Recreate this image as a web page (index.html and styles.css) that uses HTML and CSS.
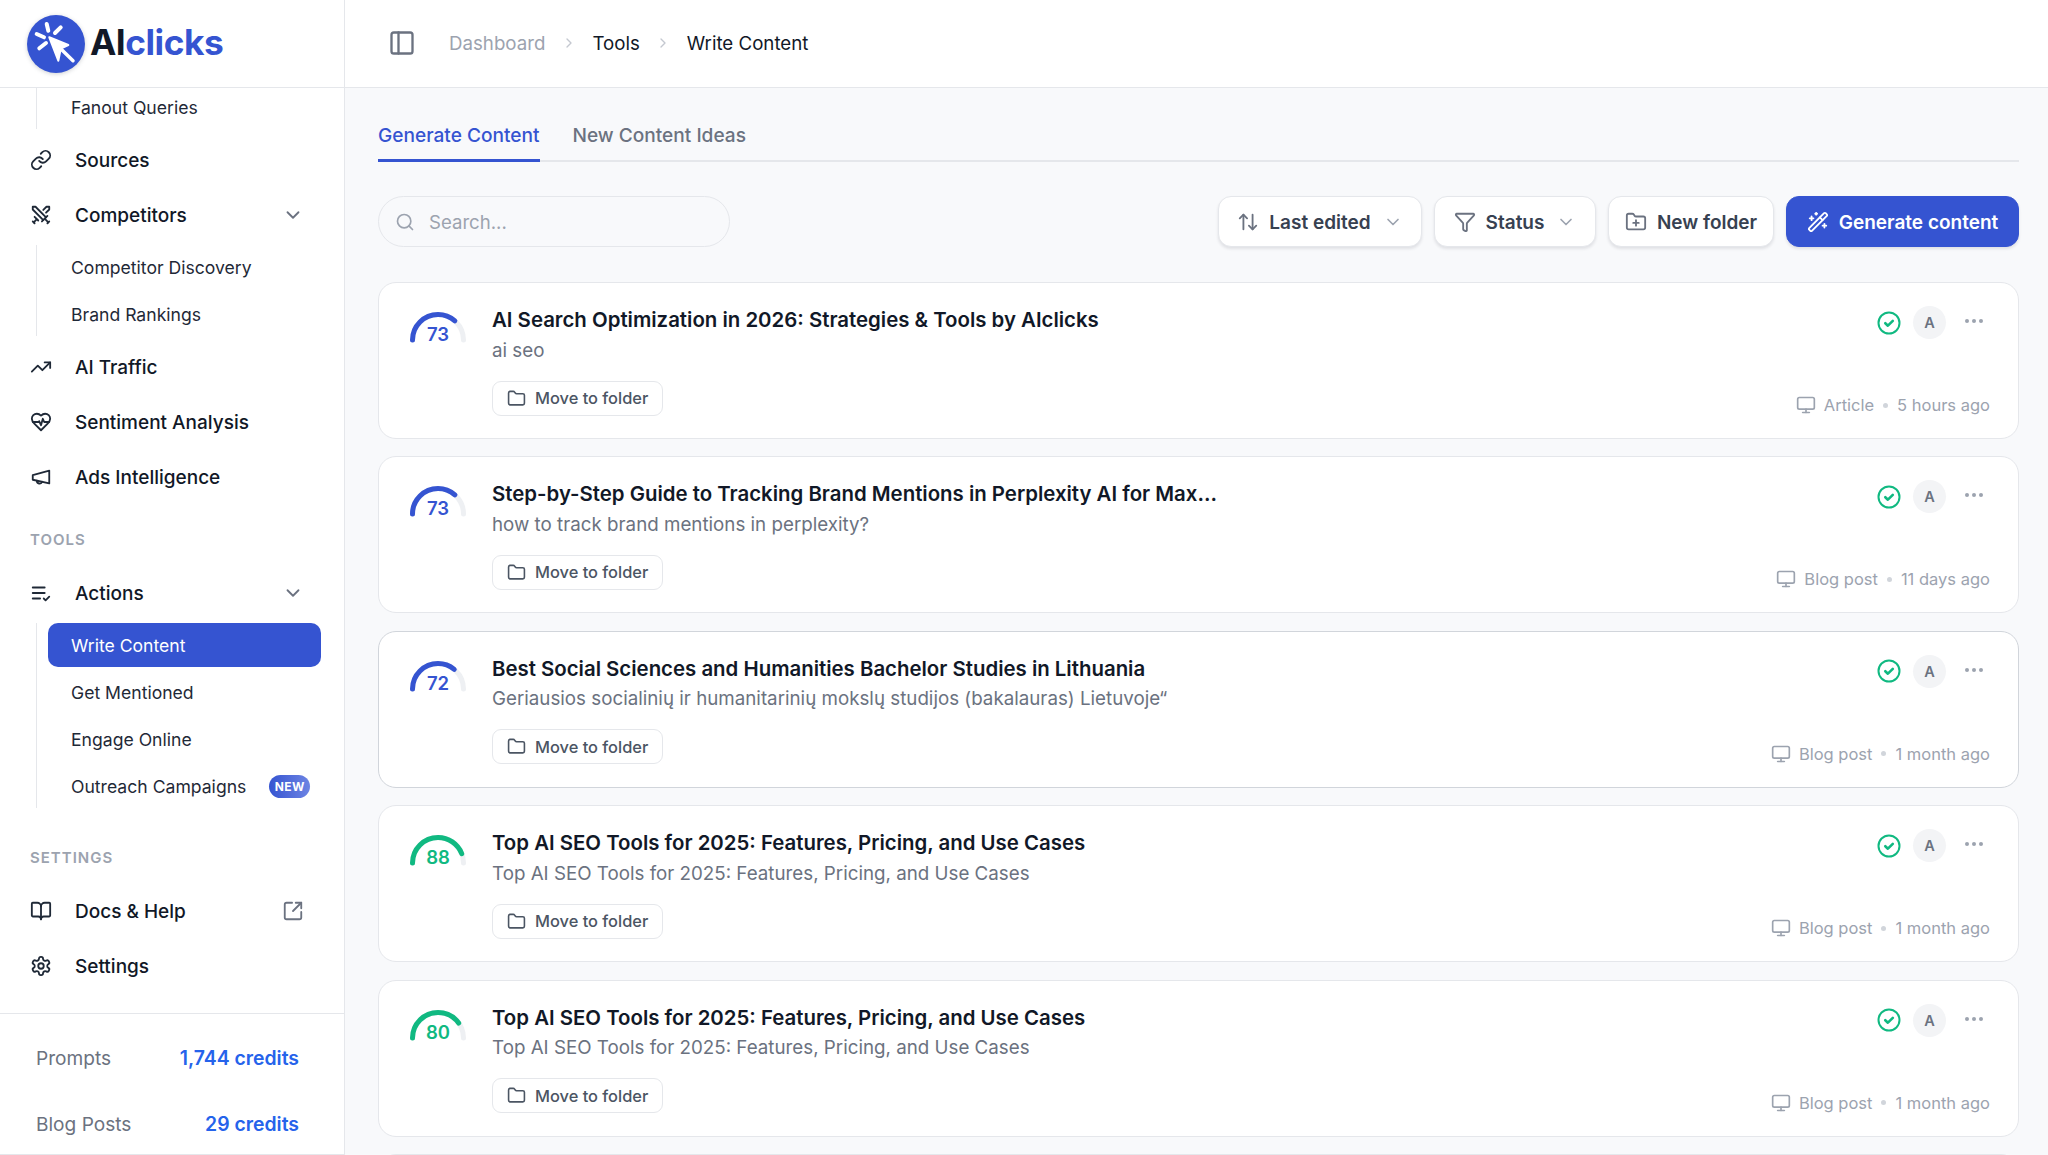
FILE: index.html
```html
<!DOCTYPE html>
<html lang="en">
<head>
    <meta charset="UTF-8">
    <meta name="viewport" content="width=device-width, initial-scale=1.0">
    <title>Write Content</title>
    <link rel="stylesheet" href="styles.css">
</head>
<body>
    <svg class="sprite" xmlns="http://www.w3.org/2000/svg">
        <symbol id="i-link" viewBox="0 0 24 24"><path d="M10 13a5 5 0 0 0 7.54.54l3-3a5 5 0 0 0-7.07-7.07l-1.72 1.71"/><path d="M14 11a5 5 0 0 0-7.54-.54l-3 3a5 5 0 0 0 7.07 7.07l1.71-1.71"/></symbol>
        <symbol id="i-swords" viewBox="0 0 24 24"><path d="M14.5 17.5 3 6V3h3l11.5 11.5"/><path d="M13 19l6-6"/><path d="M16 16l4 4"/><path d="M19 21l2-2"/><path d="M14.5 6.5 18 3h3v3l-3.5 3.5"/><path d="M5 14l4 4"/><path d="M7 17l-3 3"/><path d="M3 19l2 2"/></symbol>
        <symbol id="i-trend" viewBox="0 0 24 24"><path d="M22 7l-8.500 8.500-5-5L2 17"/><path d="M16 7h6v6"/></symbol>
        <symbol id="i-heart" viewBox="0 0 24 24"><path d="M19 14c1.490-1.460 3-3.210 3-5.500A5.500 5.500 0 0 0 16.500 3c-1.760 0-3 .5-4.500 2-1.500-1.500-2.740-2-4.500-2A5.500 5.500 0 0 0 2 8.500c0 2.300 1.500 4.050 3 5.500l7 7Z"/><path d="M3.220 12H9.500l.5-1 2 4.500 2-7 1.500 3.500h5.270"/></symbol>
        <symbol id="i-mega" viewBox="0 0 24 24"><path d="M21 5v14l-18-4v-5z"/><path d="M7.500 16a3 3 0 0 0 5.800 1.200"/></symbol>
        <symbol id="i-list" viewBox="0 0 24 24"><path d="M11 18H3"/><path d="M15 18l2 2 4-4"/><path d="M16 12H3"/><path d="M16 6H3"/></symbol>
        <symbol id="i-external" viewBox="0 0 24 24"><path d="M21 13v6a2 2 0 0 1-2 2H5a2 2 0 0 1-2-2V5a2 2 0 0 1 2-2h6"/><path d="M21 3l-9 9"/><path d="M15 3h6v6"/></symbol>
        <symbol id="i-book" viewBox="0 0 24 24"><path d="M12 7v14"/><path d="M3 18a1 1 0 0 1-1-1V4a1 1 0 0 1 1-1h5a4 4 0 0 1 4 4 4 4 0 0 1 4-4h5a1 1 0 0 1 1 1v13a1 1 0 0 1-1 1h-6a3 3 0 0 0-3 3 3 3 0 0 0-3-3z"/></symbol>
        <symbol id="i-gear" viewBox="0 0 24 24"><path d="M12.220 2h-.44a2 2 0 0 0-2 2v.18a2 2 0 0 1-1 1.730l-.43.25a2 2 0 0 1-2 0l-.15-.08a2 2 0 0 0-2.730.73l-.22.38a2 2 0 0 0 .73 2.730l.15.1a2 2 0 0 1 1 1.720v.51a2 2 0 0 1-1 1.740l-.15.09a2 2 0 0 0-.73 2.730l.22.38a2 2 0 0 0 2.730.73l.15-.08a2 2 0 0 1 2 0l.43.25a2 2 0 0 1 1 1.730V20a2 2 0 0 0 2 2h.44a2 2 0 0 0 2-2v-.18a2 2 0 0 1 1-1.730l.43-.25a2 2 0 0 1 2 0l.15.08a2 2 0 0 0 2.730-.73l.22-.39a2 2 0 0 0-.73-2.730l-.15-.08a2 2 0 0 1-1-1.740v-.5a2 2 0 0 1 1-1.740l.15-.09a2 2 0 0 0 .73-2.730l-.22-.38a2 2 0 0 0-2.730-.73l-.15.08a2 2 0 0 1-2 0l-.43-.25a2 2 0 0 1-1-1.730V4a2 2 0 0 0-2-2z"/><circle cx="12" cy="12" r="3"/></symbol>
        <symbol id="i-panel" viewBox="0 0 24 24"><rect x="3" y="3" width="18" height="18" rx="2"/><path d="M9 3v18"/></symbol>
        <symbol id="i-chev-right" viewBox="0 0 24 24"><path d="M9 6l6 6-6 6"/></symbol>
        <symbol id="i-chev-down" viewBox="0 0 24 24"><path d="M6 9l6 6 6-6"/></symbol>
        <symbol id="i-search" viewBox="0 0 24 24"><circle cx="11" cy="11" r="8"/><path d="M21 21l-4.300-4.300"/></symbol>
        <symbol id="i-sort" viewBox="0 0 24 24"><path d="M21 16l-4 4-4-4"/><path d="M17 20V4"/><path d="M3 8l4-4 4 4"/><path d="M7 4v16"/></symbol>
        <symbol id="i-funnel" viewBox="0 0 24 24"><path d="M10 20a1 1 0 0 0 .553.895l2 1A1 1 0 0 0 14 21v-7a2 2 0 0 1 .517-1.341L21.740 4.670A1 1 0 0 0 21 3H3a1 1 0 0 0-.742 1.670l7.225 7.989A2 2 0 0 1 10 14z"/></symbol>
        <symbol id="i-folder-plus" viewBox="0 0 24 24"><path d="M12 10v6"/><path d="M9 13h6"/><path d="M20 20a2 2 0 0 0 2-2V8a2 2 0 0 0-2-2h-7.900a2 2 0 0 1-1.690-.9L9.600 3.900A2 2 0 0 0 7.930 3H4a2 2 0 0 0-2 2v13a2 2 0 0 0 2 2Z"/></symbol>
        <symbol id="i-wand" viewBox="0 0 24 24"><path d="M21.640 3.640l-1.280-1.280a1.210 1.210 0 0 0-1.720 0L2.360 18.640a1.210 1.210 0 0 0 0 1.720l1.280 1.280a1.200 1.200 0 0 0 1.720 0L21.640 5.360a1.200 1.200 0 0 0 0-1.720"/><path d="M14 7l3 3"/><path d="M5 6v4"/><path d="M19 14v4"/><path d="M10 2v2"/><path d="M7 8H3"/><path d="M21 16h-4"/><path d="M11 3H9"/></symbol>
        <symbol id="i-folder" viewBox="0 0 24 24"><path d="M20 20a2 2 0 0 0 2-2V8a2 2 0 0 0-2-2h-7.900a2 2 0 0 1-1.690-.9L9.600 3.900A2 2 0 0 0 7.930 3H4a2 2 0 0 0-2 2v13a2 2 0 0 0 2 2Z"/></symbol>
        <symbol id="i-monitor" viewBox="0 0 24 24"><rect x="2" y="3" width="20" height="14" rx="2"/><path d="M8 21h8"/><path d="M12 17v4"/></symbol>
        <symbol id="i-check" viewBox="0 0 24 24"><circle cx="12" cy="12" r="10.500"/><path d="M8.300 12.200l2.600 2.500 4.900-4.900" stroke-width="2.600"/></symbol>
    </svg>

    <div class="app">
        <aside class="sidebar">
            <div class="logo">
                <svg class="logo-mark" viewBox="0 0 58 58">
                    <circle cx="29" cy="29" r="29" fill="#3554d1"/>
                    <path d="M22.300 22.300l19 7.700-7.500 3.500-2.500 12.200z" fill="#fff" stroke="#fff" stroke-width="2" stroke-linejoin="round"/>
                    <path d="M34.500 34.500l11.500 11.200" stroke="#fff" stroke-width="3.500" stroke-linecap="round"/>
                    <path d="M19.700 9l1.600 6.700M33.700 12.300l-5.700 5.700M9.700 19l7.300 3.300M12.300 33.300l6.700-5.300" stroke="#fff" stroke-width="4" stroke-linecap="round"/>
                </svg>
                <span class="logo-text">AI<span class="logo-accent">clicks</span></span>
            </div>

            <nav class="nav">
                <div class="sub">
                    <a class="sub-item">Fanout Queries</a>
                </div>
                <a class="nav-row"><svg class="icon"><use href="#i-link"/></svg>Sources</a>
                <a class="nav-row"><svg class="icon"><use href="#i-swords"/></svg>Competitors<svg class="nav-end chev"><use href="#i-chev-down"/></svg></a>
                <div class="sub">
                    <a class="sub-item">Competitor Discovery</a>
                    <a class="sub-item">Brand Rankings</a>
                </div>
                <a class="nav-row"><svg class="icon"><use href="#i-trend"/></svg>AI Traffic</a>
                <a class="nav-row"><svg class="icon"><use href="#i-heart"/></svg>Sentiment Analysis</a>
                <a class="nav-row"><svg class="icon"><use href="#i-mega"/></svg>Ads Intelligence</a>

                <div class="nav-label">TOOLS</div>
                <a class="nav-row"><svg class="icon"><use href="#i-list"/></svg>Actions<svg class="nav-end chev"><use href="#i-chev-down"/></svg></a>
                <div class="sub">
                    <a class="sub-item active">Write Content</a>
                    <a class="sub-item">Get Mentioned</a>
                    <a class="sub-item">Engage Online</a>
                    <a class="sub-item">Outreach Campaigns<span class="badge">NEW</span></a>
                </div>

                <div class="nav-label nav-label-settings">SETTINGS</div>
                <a class="nav-row"><svg class="icon"><use href="#i-book"/></svg>Docs &amp; Help<svg class="nav-end ext"><use href="#i-external"/></svg></a>
                <a class="nav-row"><svg class="icon"><use href="#i-gear"/></svg>Settings</a>
            </nav>

            <div class="credits">
                <div class="credit-row"><span>Prompts</span><b>1,744 credits</b></div>
                <div class="credit-row"><span>Blog Posts</span><b>29 credits</b></div>
            </div>
        </aside>

        <div class="main">
            <header class="topbar">
                <svg class="panel-icon"><use href="#i-panel"/></svg>
                <span class="crumb muted">Dashboard</span>
                <svg class="crumb-sep"><use href="#i-chev-right"/></svg>
                <span class="crumb">Tools</span>
                <svg class="crumb-sep"><use href="#i-chev-right"/></svg>
                <span class="crumb">Write Content</span>
            </header>

            <div class="content">
                <div class="tabs">
                    <a class="tab active">Generate Content</a>
                    <a class="tab">New Content Ideas</a>
                </div>

                <div class="toolbar">
                    <div class="search">
                        <svg class="search-icon"><use href="#i-search"/></svg>
                        <span>Search...</span>
                    </div>
                    <div class="actions">
                        <button class="btn btn-sort"><svg class="btn-icon"><use href="#i-sort"/></svg>Last edited<svg class="btn-chev"><use href="#i-chev-down"/></svg></button>
                        <button class="btn btn-status"><svg class="btn-icon"><use href="#i-funnel"/></svg>Status<svg class="btn-chev"><use href="#i-chev-down"/></svg></button>
                        <button class="btn btn-folder"><svg class="btn-icon"><use href="#i-folder-plus"/></svg>New folder</button>
                        <button class="btn btn-primary"><svg class="btn-icon"><use href="#i-wand"/></svg>Generate content</button>
                    </div>
                </div>

                <div class="cards">
                    <div class="card">
                        <svg class="gauge blue" viewBox="0 0 60 42"><path class="track" d="M4.500 30a25.500 25.500 0 0 1 51 0" pathLength="100"/><path class="fill" d="M4.500 30a25.500 25.500 0 0 1 51 0" pathLength="100" stroke-dasharray="73 100"/><text x="30" y="31">73</text></svg>
                        <div class="card-body">
                            <div class="card-title">AI Search Optimization in 2026: Strategies &amp; Tools by AIclicks</div>
                            <div class="card-sub">ai seo</div>
                            <button class="move"><svg class="move-icon"><use href="#i-folder"/></svg>Move to folder</button>
                        </div>
                        <div class="card-side">
                            <div class="card-status"><svg class="check"><use href="#i-check"/></svg><span class="avatar">A</span><span class="dots"><i></i><i></i><i></i></span></div>
                            <div class="meta"><svg class="meta-icon"><use href="#i-monitor"/></svg>Article<span class="meta-dot"></span>5 hours ago</div>
                        </div>
                    </div>

                    <div class="card">
                        <svg class="gauge blue" viewBox="0 0 60 42"><path class="track" d="M4.500 30a25.500 25.500 0 0 1 51 0" pathLength="100"/><path class="fill" d="M4.500 30a25.500 25.500 0 0 1 51 0" pathLength="100" stroke-dasharray="73 100"/><text x="30" y="31">73</text></svg>
                        <div class="card-body">
                            <div class="card-title">Step-by-Step Guide to Tracking Brand Mentions in Perplexity AI for Max...</div>
                            <div class="card-sub">how to track brand mentions in perplexity?</div>
                            <button class="move"><svg class="move-icon"><use href="#i-folder"/></svg>Move to folder</button>
                        </div>
                        <div class="card-side">
                            <div class="card-status"><svg class="check"><use href="#i-check"/></svg><span class="avatar">A</span><span class="dots"><i></i><i></i><i></i></span></div>
                            <div class="meta"><svg class="meta-icon"><use href="#i-monitor"/></svg>Blog post<span class="meta-dot"></span>11 days ago</div>
                        </div>
                    </div>

                    <div class="card card-dark">
                        <svg class="gauge blue" viewBox="0 0 60 42"><path class="track" d="M4.500 30a25.500 25.500 0 0 1 51 0" pathLength="100"/><path class="fill" d="M4.500 30a25.500 25.500 0 0 1 51 0" pathLength="100" stroke-dasharray="72 100"/><text x="30" y="31">72</text></svg>
                        <div class="card-body">
                            <div class="card-title">Best Social Sciences and Humanities Bachelor Studies in Lithuania</div>
                            <div class="card-sub">Geriausios socialinių ir humanitarinių mokslų studijos (bakalauras) Lietuvoje“</div>
                            <button class="move"><svg class="move-icon"><use href="#i-folder"/></svg>Move to folder</button>
                        </div>
                        <div class="card-side">
                            <div class="card-status"><svg class="check"><use href="#i-check"/></svg><span class="avatar">A</span><span class="dots"><i></i><i></i><i></i></span></div>
                            <div class="meta"><svg class="meta-icon"><use href="#i-monitor"/></svg>Blog post<span class="meta-dot"></span>1 month ago</div>
                        </div>
                    </div>

                    <div class="card">
                        <svg class="gauge green" viewBox="0 0 60 42"><path class="track" d="M4.500 30a25.500 25.500 0 0 1 51 0" pathLength="100"/><path class="fill" d="M4.500 30a25.500 25.500 0 0 1 51 0" pathLength="100" stroke-dasharray="88 100"/><text x="30" y="31">88</text></svg>
                        <div class="card-body">
                            <div class="card-title">Top AI SEO Tools for 2025: Features, Pricing, and Use Cases</div>
                            <div class="card-sub">Top AI SEO Tools for 2025: Features, Pricing, and Use Cases</div>
                            <button class="move"><svg class="move-icon"><use href="#i-folder"/></svg>Move to folder</button>
                        </div>
                        <div class="card-side">
                            <div class="card-status"><svg class="check"><use href="#i-check"/></svg><span class="avatar">A</span><span class="dots"><i></i><i></i><i></i></span></div>
                            <div class="meta"><svg class="meta-icon"><use href="#i-monitor"/></svg>Blog post<span class="meta-dot"></span>1 month ago</div>
                        </div>
                    </div>

                    <div class="card">
                        <svg class="gauge green" viewBox="0 0 60 42"><path class="track" d="M4.500 30a25.500 25.500 0 0 1 51 0" pathLength="100"/><path class="fill" d="M4.500 30a25.500 25.500 0 0 1 51 0" pathLength="100" stroke-dasharray="80 100"/><text x="30" y="31">80</text></svg>
                        <div class="card-body">
                            <div class="card-title">Top AI SEO Tools for 2025: Features, Pricing, and Use Cases</div>
                            <div class="card-sub">Top AI SEO Tools for 2025: Features, Pricing, and Use Cases</div>
                            <button class="move"><svg class="move-icon"><use href="#i-folder"/></svg>Move to folder</button>
                        </div>
                        <div class="card-side">
                            <div class="card-status"><svg class="check"><use href="#i-check"/></svg><span class="avatar">A</span><span class="dots"><i></i><i></i><i></i></span></div>
                            <div class="meta"><svg class="meta-icon"><use href="#i-monitor"/></svg>Blog post<span class="meta-dot"></span>1 month ago</div>
                        </div>
                    </div>

                    <div class="card"></div>
                </div>
            </div>
        </div>
    </div>
</body>
</html>
```

FILE: styles.css
```css
* {
    box-sizing: border-box;
}
html, body {
    height: 100%;
    margin: 0;
    overflow: hidden;
}
body {
    font-family: Inter, "Liberation Sans", sans-serif;
    color: #111827;
    background: #f8f9fb;
}
.sprite {
    display: none;
}
svg use {
    fill: none;
    stroke: currentColor;
    stroke-width: 2;
    stroke-linecap: round;
    stroke-linejoin: round;
}
.app {
    display: flex;
    height: 1155px;
}

/* sidebar */
.sidebar {
    width: 345px;
    flex: none;
    display: flex;
    flex-direction: column;
    background: #fff;
    border-right: 1px solid #e5e7eb;
}
.logo {
    height: 88px;
    flex: none;
    display: flex;
    align-items: center;
    padding-left: 27px;
    gap: 5px;
    border-bottom: 1px solid #e5e7eb;
}
.logo-mark {
    width: 58px;
    height: 58px;
    flex: none;
    filter: drop-shadow(0 1px 2px rgba(17, 24, 39, 0.2));
}
.logo-text {
    margin-top: -2px;
    font-size: 35.3px;
    font-weight: 700;
    letter-spacing: -0.5px;
    color: #111827;
}
.logo-accent {
    color: #3554d1;
}
.nav {
    flex: 1;
    display: flex;
    flex-direction: column;
    overflow: hidden;
}
.nav-row {
    height: 44px;
    flex: none;
    display: flex;
    align-items: center;
    margin: 0 0 11px 30px;
    width: 274px;
    font-size: 19px;
    font-weight: 500;
    color: #111827;
}
.icon {
    width: 22px;
    height: 22px;
    flex: none;
    margin-right: 23px;
    color: #1f2937;
}
.nav-end {
    margin-left: auto;
}
.chev {
    width: 22px;
    height: 22px;
    color: #6b7280;
}
.ext {
    width: 22px;
    height: 22px;
    color: #6b7280;
}
.sub {
    flex: none;
    display: flex;
    flex-direction: column;
    gap: 3px;
    margin: -3px 0 9px 36px;
    padding-left: 11px;
    border-left: 1px solid #e5e7eb;
}
.sub-item {
    height: 44px;
    width: 273px;
    display: flex;
    align-items: center;
    padding: 1px 0 0 23px;
    border-radius: 10px;
    font-size: 17.6px;
    color: #1f2937;
}
.sub-item.active {
    background: #3554d1;
    color: #fff;
}
.badge {
    margin-left: 23px;
    width: 41px;
    height: 23px;
    display: flex;
    align-items: center;
    justify-content: center;
    border-radius: 12px;
    background: linear-gradient(90deg, #3554d1, #6d84e3);
    color: #fff;
    font-size: 12px;
    font-weight: 700;
    letter-spacing: 0.4px;
}
.nav-label {
    height: 20px;
    flex: none;
    margin: 20px 0 21px 30px;
    font-size: 15px;
    line-height: 20px;
    font-weight: 600;
    letter-spacing: 1px;
    color: #9ca3af;
}
.nav-label-settings {
    margin-top: 31px;
}
.credits {
    flex: none;
    height: 142px;
    padding: 22px 45px 8px 36px;
    display: flex;
    flex-direction: column;
    gap: 22px;
    border-top: 1px solid #e5e7eb;
    border-bottom: 1px solid #e5e7eb;
}
.credit-row {
    height: 44px;
    display: flex;
    align-items: center;
    justify-content: space-between;
    font-size: 19.1px;
    color: #6b7280;
}
.credit-row b {
    font-size: 19.4px;
    font-weight: 600;
    color: #2563eb;
}

/* top bar */
.main {
    flex: 1;
    min-width: 0;
    display: flex;
    flex-direction: column;
}
.topbar {
    height: 88px;
    flex: none;
    display: flex;
    align-items: center;
    padding-left: 43px;
    padding-bottom: 1px;
    background: #fff;
    border-bottom: 1px solid #e5e7eb;
}
.panel-icon {
    width: 28px;
    height: 28px;
    margin-right: 33px;
    color: #6b7280;
}
.crumb {
    font-size: 18.7px;
    color: #111827;
}
.crumb.muted {
    color: #9ca3af;
}
.crumb-sep {
    width: 16px;
    height: 16px;
    margin: 0 15.5px;
    color: #c4c8d0;
}

/* tabs and toolbar */
.content {
    flex: 1;
    min-height: 0;
    padding: 0 29px 0 33px;
    overflow: hidden;
}
.tabs {
    height: 74px;
    display: flex;
    align-items: flex-end;
    gap: 33px;
    border-bottom: 2px solid #e5e7eb;
}
.tab {
    height: 48px;
    margin-bottom: -2px;
    font-size: 19.1px;
    line-height: 43px;
    font-weight: 500;
    color: #6b7280;
    border-bottom: 2px solid transparent;
}
.tab.active {
    color: #3554d1;
    border-bottom-color: #3554d1;
    border-bottom-width: 3px;
}
.toolbar {
    display: flex;
    justify-content: space-between;
    margin-top: 34px;
    height: 51px;
}
.search {
    width: 352px;
    display: flex;
    align-items: center;
    gap: 14px;
    padding-left: 16px;
    border: 1px solid #e5e7eb;
    border-radius: 26px;
    font-size: 18.6px;
    color: #9ca3af;
}
.search-icon {
    width: 20px;
    height: 20px;
}
.actions {
    display: flex;
    gap: 12px;
}
.btn {
    height: 51px;
    display: flex;
    align-items: center;
    justify-content: center;
    gap: 10px;
    padding: 1px 0 0;
    font-family: inherit;
    font-size: 19px;
    font-weight: 600;
    color: #374151;
    background: #fff;
    border: 1px solid #e5e7eb;
    border-radius: 13px;
    box-shadow: 0 2px 3px rgba(17, 24, 39, 0.1);
}
.btn-sort {
    width: 204px;
}
.btn-status {
    width: 162px;
}
.btn-folder {
    width: 166px;
}
.btn-primary {
    width: 233px;
    background: #3554d1;
    border-color: #3554d1;
    color: #fff;
}
.btn-icon {
    width: 22px;
    height: 22px;
    flex: none;
    color: #6b7280;
}
.btn-primary .btn-icon {
    color: #fff;
}
.btn-chev {
    width: 20px;
    height: 20px;
    margin-left: 2px;
    color: #9ca3af;
}

/* content cards */
.cards {
    display: flex;
    flex-direction: column;
    gap: 17.4px;
    margin-top: 35px;
}
.card {
    height: 157px;
    flex: none;
    display: flex;
    padding: 0 28px 0 29px;
    background: #fff;
    border: 1px solid #e5e7eb;
    border-radius: 18px;
}
.card-dark {
    border-color: #d1d5db;
}
.gauge {
    width: 60px;
    height: 42px;
    flex: none;
    margin: 27px 24px 0 0;
}
.gauge path {
    fill: none;
    stroke-width: 5;
    stroke-linecap: round;
}
.gauge .track {
    stroke: #eef0f3;
}
.gauge text {
    font-family: Inter, "Liberation Sans", sans-serif;
    font-size: 18.5px;
    font-weight: 600;
    text-anchor: middle;
}
.gauge.blue .fill {
    stroke: #3554d1;
}
.gauge.blue text {
    fill: #3554d1;
}
.gauge.green .fill {
    stroke: #10b981;
}
.gauge.green text {
    fill: #10b981;
}
.card-body {
    flex: 1;
    min-width: 0;
    padding-top: 23px;
}
.card-title {
    height: 28px;
    font-size: 20.4px;
    line-height: 28px;
    font-weight: 600;
    color: #111827;
}
.card-sub {
    height: 28px;
    margin-top: 2.6px;
    font-size: 18.75px;
    line-height: 28px;
    color: #6b7280;
}
.move {
    height: 35px;
    margin-top: 16px;
    padding: 0 14px;
    display: flex;
    align-items: center;
    gap: 9px;
    font-family: inherit;
    font-size: 16.4px;
    font-weight: 500;
    color: #4b5563;
    background: #fff;
    border: 1px solid #e5e7eb;
    border-radius: 9px;
}
.move-icon {
    width: 19px;
    height: 19px;
}
.card-side {
    flex: none;
    display: flex;
    flex-direction: column;
    align-items: flex-end;
    justify-content: space-between;
    padding: 23px 0 23px;
}
.card-status {
    display: flex;
    align-items: center;
    padding-right: 7px;
}
.check {
    width: 24px;
    height: 24px;
    margin-right: 12px;
    color: #10b981;
}
.avatar {
    width: 33px;
    height: 33px;
    display: flex;
    align-items: center;
    justify-content: center;
    border-radius: 50%;
    background: #f3f4f6;
    font-size: 14.5px;
    font-weight: 600;
    color: #6b7280;
}
.dots {
    display: flex;
    gap: 3px;
    margin: -3px 0 0 19px;
}
.dots i {
    width: 4px;
    height: 4px;
    border-radius: 50%;
    background: #9ca3af;
}
.meta {
    display: flex;
    align-items: center;
    font-size: 16.5px;
    color: #9ca3af;
}
.meta-icon {
    width: 20px;
    height: 20px;
    margin-right: 8px;
}
.meta-dot {
    width: 5px;
    height: 5px;
    margin: 0 9px;
    border-radius: 50%;
    background: #d1d5db;
}
```
